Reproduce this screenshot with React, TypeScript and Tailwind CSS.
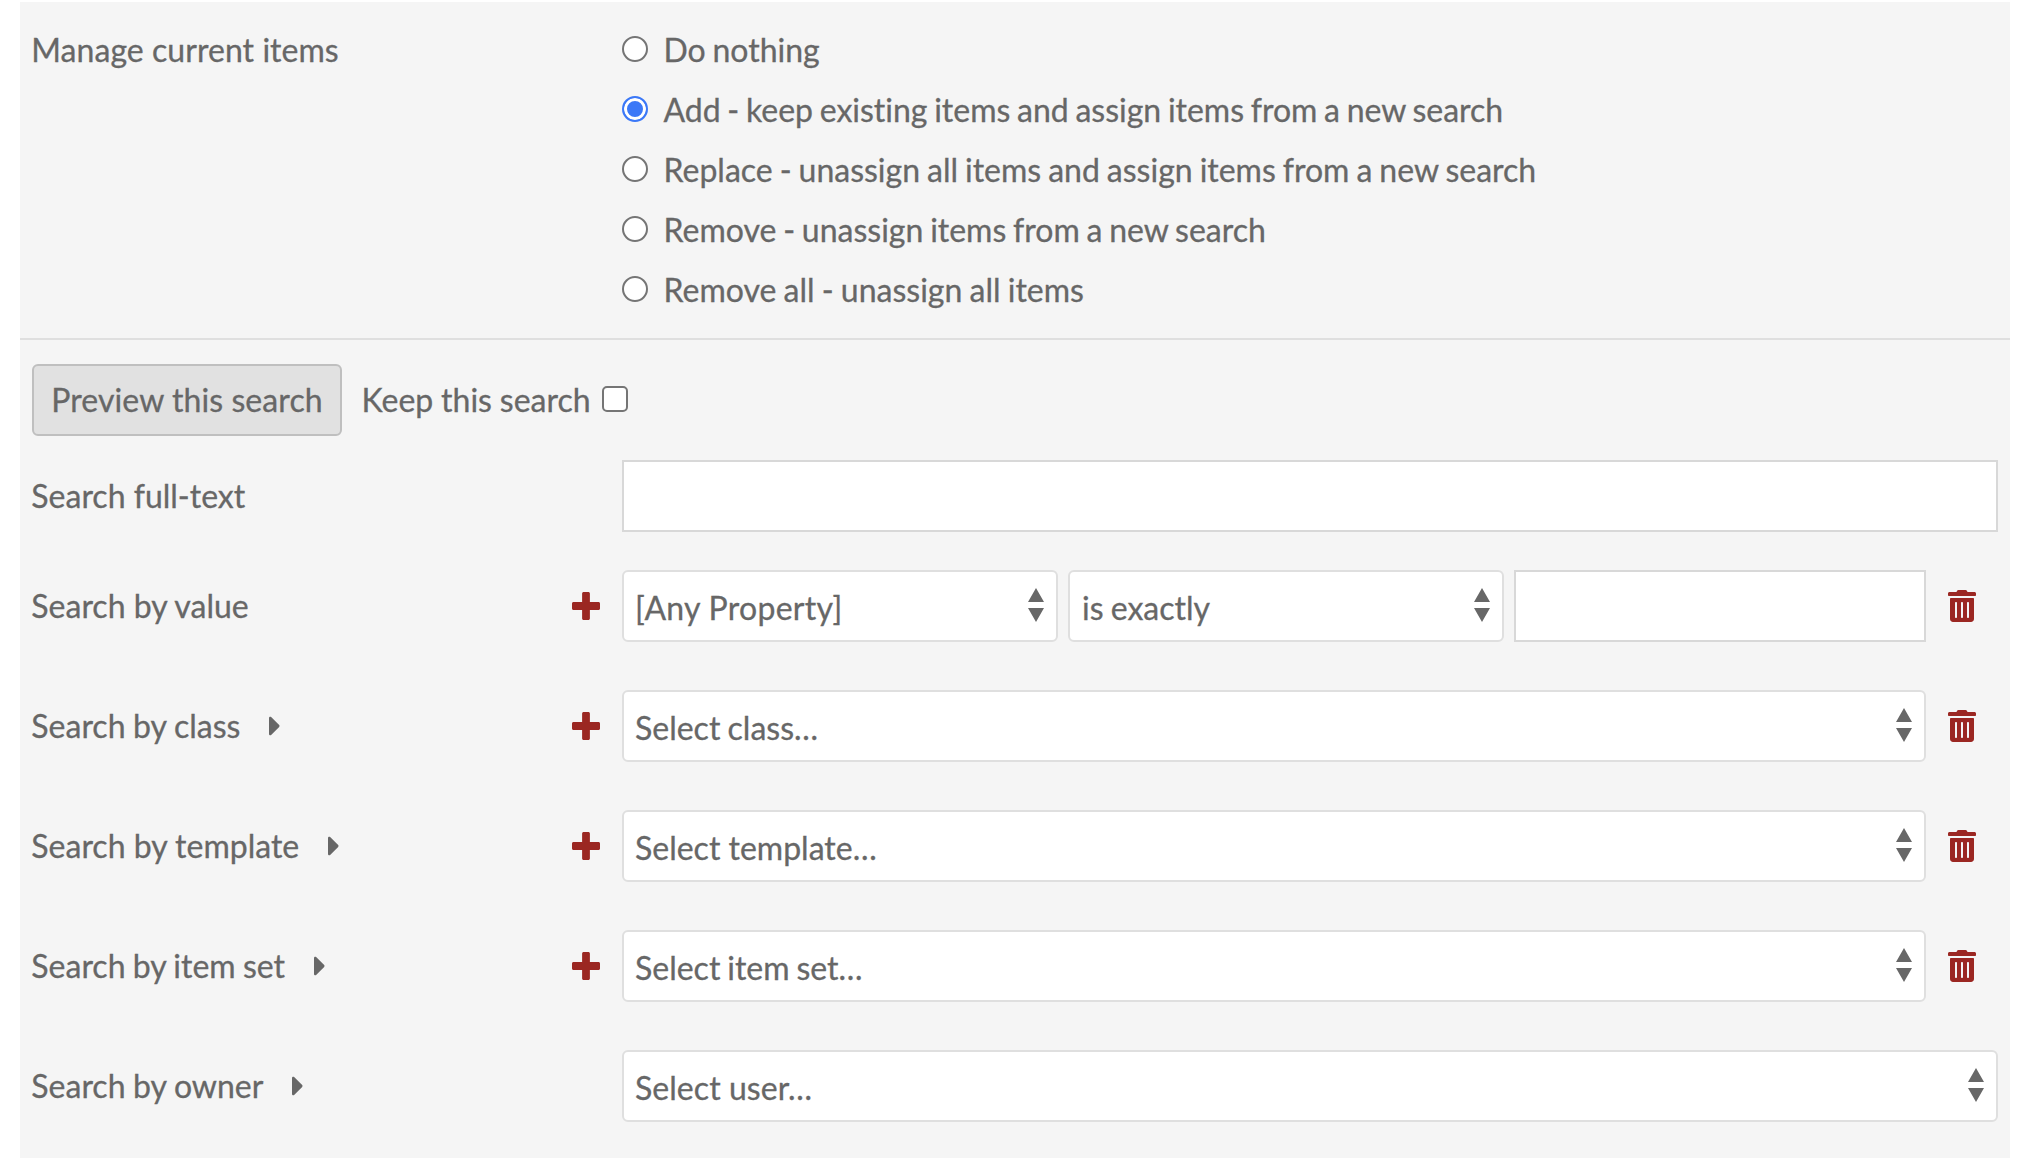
import { ReactNode, useState } from 'react';

const OPTIONS = [
  { text: 'Do nothing', spacing: '[word-spacing:-1.5px]' },
  { text: 'Add - keep existing items and assign items from a new search', spacing: '[word-spacing:-1.5px]' },
  { text: 'Replace - unassign all items and assign items from a new search', spacing: '[word-spacing:-1.2px]' },
  { text: 'Remove - unassign items from a new search', spacing: '[word-spacing:-1.4px]' },
  { text: 'Remove all - unassign all items', spacing: '[word-spacing:-1px]' },
];

function PlusIcon() {
  return (
    <svg viewBox="0 0 448 512" className="h-8 w-7 fill-current">
      <path d="M448 294.2v-76.4c0-13.3-10.7-24-24-24H286.2V56c0-13.3-10.7-24-24-24h-76.4c-13.3 0-24 10.7-24 24v137.8H24c-13.3 0-24 10.7-24 24v76.4c0 13.3 10.7 24 24 24h137.8V456c0 13.3 10.7 24 24 24h76.4c13.3 0 24-10.7 24-24V318.2H424c13.3 0 24-10.7 24-24z" />
    </svg>
  );
}

function TrashIcon() {
  return (
    <svg viewBox="0 0 448 512" className="h-8 w-7 fill-current">
      <path d="M0 84V56c0-13.3 10.7-24 24-24h112l9.4-18.7c4-8.2 12.3-13.3 21.4-13.3h114.3c9.1 0 17.4 5.1 21.5 13.3L312 32h112c13.3 0 24 10.7 24 24v28c0 6.6-5.4 12-12 12H12C5.4 96 0 90.6 0 84zm416 56v324c0 26.5-21.5 48-48 48H80c-26.5 0-48-21.5-48-48V140c0-6.6 5.4-12 12-12h360c6.6 0 12 5.4 12 12zm-272 68c0-8.8-7.2-16-16-16s-16 7.2-16 16v224c0 8.8 7.2 16 16 16s16-7.2 16-16V208zm96 0c0-8.8-7.2-16-16-16s-16 7.2-16 16v224c0 8.8 7.2 16 16 16s16-7.2 16-16V208zm96 0c0-8.8-7.2-16-16-16s-16 7.2-16 16v224c0 8.8 7.2 16 16 16s16-7.2 16-16V208z" />
    </svg>
  );
}

function CaretIcon() {
  return (
    <svg viewBox="0 0 192 512" className="ml-[28.5px] h-8 w-3 fill-current">
      <path d="M0 384.662V127.338c0-17.818 21.543-26.741 34.142-14.142l128.662 128.662c7.81 7.81 7.81 20.474 0 28.284L34.142 398.804C21.543 411.404 0 402.48 0 384.662z" />
    </svg>
  );
}

type SelectProps = { text: string; textClass?: string };

function SelectBox({ text, textClass = '' }: SelectProps) {
  return (
    <div className="flex h-[72px] min-w-0 flex-1 items-center justify-between rounded-md border-2 border-[#dfdfdf] bg-white pr-3 pl-[11px]">
      <span className={`pt-1 ${textClass}`}>{text}</span>
      <svg viewBox="0 0 16 34" className="mb-0.5 h-[34px] w-4 fill-current">
        <path d="M8 0L16 14H0zM0 20H16L8 34z" />
      </svg>
    </div>
  );
}

type RowProps = {
  label: string;
  labelClass?: string;
  caret?: boolean;
  multiple?: boolean;
  children: ReactNode;
};

function SearchRow({ label, labelClass = '', caret, multiple, children }: RowProps) {
  return (
    <div className="flex h-[72px] items-center">
      <div className="flex w-[590px] shrink-0 items-center">
        <span className={`-ml-[0.7px] ${labelClass}`}>{label}</span>
        {caret && <CaretIcon />}
        {multiple && (
          <button className="mr-[22.5px] ml-auto text-[#9b2722]" aria-label="Add value">
            <PlusIcon />
          </button>
        )}
      </div>
      <div className="flex min-w-0 flex-1 gap-2.5">{children}</div>
      {multiple && (
        <button className="mr-[22px] ml-[22px] text-[#9b2722]" aria-label="Remove value">
          <TrashIcon />
        </button>
      )}
    </div>
  );
}

export default function App() {
  const [selected, setSelected] = useState(1);

  return (
    <div className="h-[1164px] w-[2026px] bg-white pt-0.5 pl-5 font-['Lato',sans-serif] text-[32px] leading-[48px] text-[#676767] [-webkit-text-stroke:0.3px_#676767] [font-variant-ligatures:none]">
      <div className="h-[1156px] w-[1990px] bg-[#f5f5f5]">
        <section className="flex h-[338px] border-b-2 border-[#dfdfdf] pt-6 pl-3">
          <div className="w-[590px]">
            <span className="-ml-[0.7px] tracking-[0.05px]">Manage current items</span>
          </div>
          <div className="flex flex-col gap-3">
            {OPTIONS.map((option, i) => (
              <label key={option.text} className="flex h-12 items-center gap-[15.5px]">
                <input
                  type="radio"
                  name="action"
                  checked={selected === i}
                  onChange={() => setSelected(i)}
                  className="mb-0.5 size-[26px] appearance-none rounded-full border-2 border-[#757575] bg-white checked:border-[#3b78f7] checked:bg-[#3b78f7] checked:shadow-[inset_0_0_0_3px_white]"
                />
                <span className={option.spacing}>{option.text}</span>
              </label>
            ))}
          </div>
        </section>

        <section className="pt-6 pr-3 pl-3">
          <div className="mb-6 flex h-[72px] items-center">
            <button className="h-[72px] w-[310px] rounded-md border-2 border-[#bfbfbf] bg-[#e1e1e1] tracking-[0.08px]">
              Preview this search
            </button>
            <label className="ml-[19.5px] flex w-[266.5px] items-center justify-between">
              <span className="[word-spacing:-0.3px]">Keep this search</span>
              <input
                type="checkbox"
                className="mb-0.5 size-[26px] appearance-none rounded-[5px] border-2 border-[#757575] bg-white"
              />
            </label>
          </div>

          <SearchRow label="Search full-text">
            <input className="h-[72px] min-w-0 flex-1 border-2 border-[#d8d8d8] bg-white px-3" />
          </SearchRow>

          <div className="mt-[38px] flex flex-col gap-12">
            <SearchRow label="Search by value" multiple>
              <div className="flex w-[436px] shrink-0">
                <SelectBox text="[Any Property]" textClass="tracking-[0.28px]" />
              </div>
              <div className="flex w-[436px] shrink-0">
                <SelectBox text="is exactly" textClass="pl-px [word-spacing:-1px]" />
              </div>
              <input className="h-[72px] min-w-0 flex-1 border-2 border-[#d8d8d8] bg-white px-3" />
            </SearchRow>
            <SearchRow label="Search by class" labelClass="[word-spacing:-0.6px]" caret multiple>
              <SelectBox text="Select class…" textClass="[word-spacing:-1px]" />
            </SearchRow>
            <SearchRow label="Search by template" caret multiple>
              <SelectBox text="Select template…" />
            </SearchRow>
            <SearchRow label="Search by item set" labelClass="[word-spacing:-0.9px]" caret multiple>
              <SelectBox text="Select item set…" textClass="[word-spacing:-1.3px]" />
            </SearchRow>
            <SearchRow label="Search by owner" labelClass="[word-spacing:-0.6px]" caret>
              <SelectBox text="Select user…" textClass="tracking-[0.05px]" />
            </SearchRow>
          </div>
        </section>
      </div>
    </div>
  );
}
